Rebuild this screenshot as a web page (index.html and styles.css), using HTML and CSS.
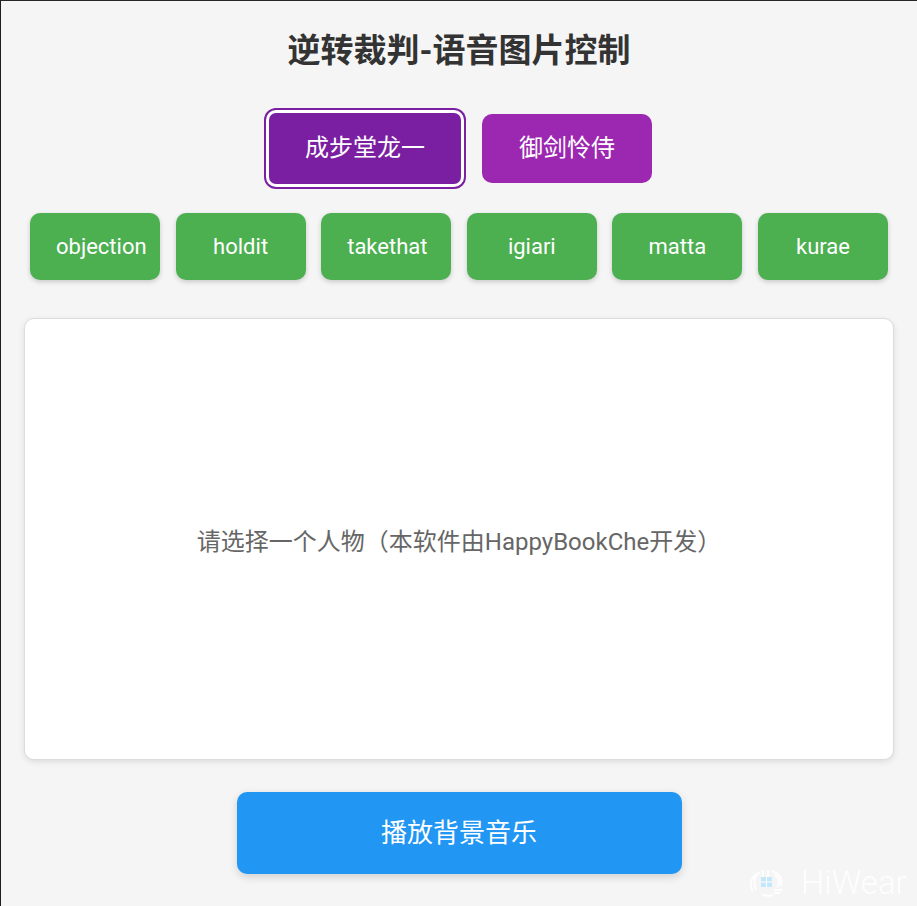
FILE: index.html
```html
<!DOCTYPE html>
<html lang="zh-CN">
<head>
    <meta charset="UTF-8">
    <meta name="viewport" content="width=device-width, initial-scale=1.0">
    <title>逆转裁判-语音图片控制</title>
    <link rel="stylesheet" href="styles.css">
</head>
<body>
    <div class="app">
        <h1 class="title">逆转裁判-语音图片控制</h1>

        <div class="char-row">
            <button class="char-btn active">成步堂龙一</button>
            <button class="char-btn alt">御剑怜侍</button>
        </div>

        <div class="voice-row">
            <button class="voice-btn">objection</button>
            <button class="voice-btn">holdit</button>
            <button class="voice-btn">takethat</button>
            <button class="voice-btn">igiari</button>
            <button class="voice-btn">matta</button>
            <button class="voice-btn">kurae</button>
        </div>

        <div class="stage">
            <p class="stage-hint">请选择一个人物（本软件由HappyBookChe开发）</p>
        </div>

        <div class="bgm-wrap">
            <button class="bgm-btn">播放背景音乐</button>
        </div>
    </div>

    <div class="watermark">
        <svg class="wm-logo" width="38" height="30" viewBox="0 0 38 30">
            <path d="M9 6 C3 9 1 17 5 23" fill="none" stroke="#fff" stroke-width="2"/>
            <path d="M12 4 C6 8 5 16 8 22" fill="none" stroke="#fff" stroke-width="2"/>
            <path d="M15 2 L15 10" fill="none" stroke="#fff" stroke-width="2"/>
            <path d="M20 2 L20 10" fill="none" stroke="#fff" stroke-width="2"/>
            <path d="M24 3 C31 5 35 11 33 18" fill="none" stroke="#fff" stroke-width="2"/>
            <path d="M27 7 C31 10 32 14 30 19" fill="none" stroke="#fff" stroke-width="2"/>
            <path d="M26 22 L34 22 M26 25 L32 25 M14 27 C18 28 22 28 25 27" fill="none" stroke="#fff" stroke-width="2"/>
            <rect x="13" y="9" width="11" height="10" fill="#bfe6fa"/>
            <path d="M18.5 9 L18.5 19 M13 14 L24 14" stroke="#fff" stroke-width="1"/>
        </svg>
        <span class="wm-text">HiWear</span>
    </div>
</body>
</html>
```
FILE: styles.css
```css
* {
    box-sizing: border-box;
    margin: 0;
    padding: 0;
}

html {
    background: #f5f5f5;
}

body {
    font-family: Roboto, "Noto Sans CJK SC", sans-serif;
    background: #f5f5f5;
    min-height: 100vh;
    border-top: 1px solid #262626;
    border-left: 1px solid #1e1e1e;
    overflow: hidden;
}

.app {
    padding: 30px 23px 0 23px;
}

.title {
    text-align: center;
    font-size: 33px;
    line-height: 40px;
    font-weight: 700;
    color: #333;
}

/* personagens */
.char-row {
    display: flex;
    justify-content: center;
    align-items: center;
    gap: 18px;
    margin-top: 39px;
}

.char-btn {
    font-family: inherit;
    font-size: 24px;
    line-height: 29px;
    color: #fff;
    background: #9c27b0;
    border: none;
    border-radius: 10px;
    padding: 20px 37px;
    cursor: pointer;
}

.char-btn.active {
    background: #7b1fa2;
    border: 3px solid #fff;
    padding: 21px 36px;
    box-shadow: 0 0 0 2px #7b1fa2;
}

/* vozes */
.voice-row {
    display: grid;
    grid-template-columns: repeat(6, minmax(0, 1fr));
    gap: 15.6px;
    padding: 0 6px;
    margin-top: 26px;
}

.voice-btn {
    min-width: 0;
    font-family: inherit;
    font-size: 22px;
    line-height: 27px;
    color: #fff;
    background: #4caf50;
    border: none;
    border-radius: 10px;
    padding: 20px 26px;
    box-shadow: 0 2px 5px rgba(0, 0, 0, 0.18);
    white-space: nowrap;
    overflow: visible;
    cursor: pointer;
}

.stage {
    margin-top: 38px;
    height: 442px;
    background: #fff;
    border: 1px solid #dcdcdc;
    border-radius: 10px;
    box-shadow: 0 2px 6px rgba(0, 0, 0, 0.1);
    display: flex;
    justify-content: center;
    align-items: center;
}

.stage-hint {
    font-size: 24px;
    color: #666;
}

.bgm-wrap {
    display: flex;
    justify-content: center;
    margin-top: 32px;
}

.bgm-btn {
    width: 445px;
    font-family: inherit;
    font-size: 26px;
    line-height: 32px;
    padding: 25px 0;
    color: #fff;
    background: #2196f3;
    border: none;
    border-radius: 10px;
    box-shadow: 0 3px 8px rgba(0, 0, 0, 0.15);
    cursor: pointer;
}

/* marca d'agua por cima */
.watermark {
    position: absolute;
    left: 748px;
    top: 866px;
    display: flex;
    align-items: center;
    gap: 15px;
    opacity: 0.9;
}

.wm-text {
    font-family: Roboto, sans-serif;
    font-weight: 300;
    font-size: 33px;
    line-height: 34px;
    color: #fff;
}
```
